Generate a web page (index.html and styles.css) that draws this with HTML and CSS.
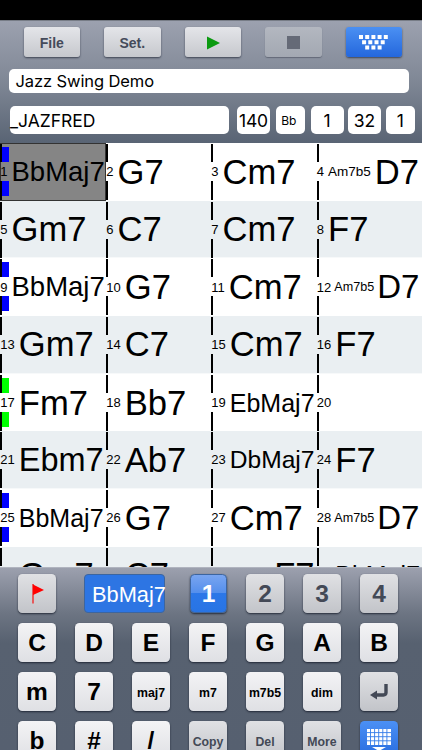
FILE: index.html
```html
<!DOCTYPE html>
<html lang="en">
<head>
<meta charset="utf-8">
<title>Jazz Swing Demo</title>
<link rel="stylesheet" href="styles.css">
</head>
<body>
<div class="app">
  <div class="status"></div>
  <header class="header">
    <div class="toolbar">
      <button class="tool">File</button>
      <button class="tool">Set.</button>
      <button class="tool"><svg width="14" height="14" viewBox="0 0 14 14"><path d="M1 .5 14 7 1 13.5z" fill="#0b9a10"/></svg></button>
      <button class="tool tool-off"><svg width="13" height="13"><rect width="13" height="13" fill="#656a77"/></svg></button>
      <button class="tool tool-blue"><svg width="29" height="15" viewBox="0 0 29 15" fill="#fff"><path d="M0 0h4v4h-4zM6.2 0h4v4h-4zM12.4 0h4v4h-4zM18.6 0h4v4h-4zM24.8 0h4v4h-4zM3.1 5.2h4v4h-4zM9.3 5.2h4v4h-4zM15.5 5.2h4v4h-4zM21.7 5.2h4v4h-4zM6.2 10.4h4v4h-4zM12.4 10.4h4v4h-4zM18.6 10.4h4v4h-4z"/></svg></button>
    </div>
    <div class="field title"><span>Jazz Swing Demo</span></div>
    <div class="fields">
      <div class="field style"><span>_JAZFRED</span></div>
      <div class="field tempo"><span>140</span></div>
      <div class="field key">Bb</div>
      <div class="field start">1</div>
      <div class="field end">32</div>
      <div class="field repeat">1</div>
    </div>
  </header>
  <main class="chart">
    <div class="cell selected mark-a"><i>1</i><b class="s27">BbMaj7</b></div>
    <div class="cell"><i>2</i><b>G7</b></div>
    <div class="cell"><i>3</i><b>Cm7</b></div>
    <div class="cell"><i>4</i><b class="mini">Am7b5</b><b>D7</b></div>

    <div class="cell alt"><i>5</i><b>Gm7</b></div>
    <div class="cell alt"><i>6</i><b>C7</b></div>
    <div class="cell alt"><i>7</i><b>Cm7</b></div>
    <div class="cell alt"><i>8</i><b>F7</b></div>

    <div class="cell mark-a"><i>9</i><b class="s27">BbMaj7</b></div>
    <div class="cell"><i>10</i><b>G7</b></div>
    <div class="cell"><i>11</i><b>Cm7</b></div>
    <div class="cell"><i>12</i><b class="mini narrow">Am7b5</b><b class="s33">D7</b></div>

    <div class="cell alt"><i>13</i><b>Gm7</b></div>
    <div class="cell alt"><i>14</i><b>C7</b></div>
    <div class="cell alt"><i>15</i><b>Cm7</b></div>
    <div class="cell alt"><i>16</i><b>F7</b></div>

    <div class="cell mark-b"><i>17</i><b>Fm7</b></div>
    <div class="cell"><i>18</i><b>Bb7</b></div>
    <div class="cell"><i>19</i><b class="s25">EbMaj7</b></div>
    <div class="cell"><i>20</i></div>

    <div class="cell alt"><i>21</i><b class="s32">Ebm7</b></div>
    <div class="cell alt"><i>22</i><b>Ab7</b></div>
    <div class="cell alt"><i>23</i><b class="s24">DbMaj7</b></div>
    <div class="cell alt"><i>24</i><b>F7</b></div>

    <div class="cell mark-a"><i>25</i><b class="s25">BbMaj7</b></div>
    <div class="cell"><i>26</i><b>G7</b></div>
    <div class="cell"><i>27</i><b>Cm7</b></div>
    <div class="cell"><i>28</i><b class="mini narrow">Am7b5</b><b class="s33">D7</b></div>

    <div class="cell alt"><i>29</i><b>Gm7</b></div>
    <div class="cell alt"><i>30</i><b>C7</b></div>
    <div class="cell alt"><i>31</i><b class="mini">Cm7</b><b class="last">F7</b></div>
    <div class="cell alt"><i>32</i><b class="s25">BbMaj7</b></div>
  </main>
  <section class="keyboard">
    <button class="keycap grey"><svg width="13" height="22" viewBox="0 0 13 22"><path d="M2 1v19.5" stroke="#e33" stroke-width="1.5"/><path d="M2 1.500 13 7 2 12z" fill="#f00"/></svg></button>
    <div class="display">BbMaj7</div>
    <button class="keycap active">1</button>
    <button class="keycap grey">2</button>
    <button class="keycap grey">3</button>
    <button class="keycap grey">4</button>

    <button class="keycap">C</button>
    <button class="keycap">D</button>
    <button class="keycap">E</button>
    <button class="keycap">F</button>
    <button class="keycap">G</button>
    <button class="keycap">A</button>
    <button class="keycap">B</button>

    <button class="keycap">m</button>
    <button class="keycap">7</button>
    <button class="keycap small">maj7</button>
    <button class="keycap small">m7</button>
    <button class="keycap small">m7b5</button>
    <button class="keycap small">dim</button>
    <button class="keycap grey"><svg width="18" height="16" viewBox="0 0 18 16"><path d="M16 0v8.500q0 2.500-2.500 2.500H5" fill="none" stroke="#434956" stroke-width="3.4"/><path d="M0 11 7 6.500v9z" fill="#434956"/></svg></button>

    <button class="keycap">b</button>
    <button class="keycap">#</button>
    <button class="keycap">/</button>
    <button class="keycap grey small">Copy</button>
    <button class="keycap grey small">Del</button>
    <button class="keycap grey small">More</button>
    <button class="keycap blue"><svg width="24" height="22" viewBox="0 0 24 22" fill="#fff"><path d="M0 0h24v16H0z"/><path d="M3.500 0v16M7.600 0v16M11.700 0v16M15.800 0v16M19.900 0v16M0 3.600h24M0 7.700h24M0 11.800h24" stroke="#327be9" stroke-width=".9"/><path d="M5 18h14l-7 4z"/></svg></button>
  </section>
</div>
</body>
</html>
```

FILE: styles.css
```css
* { box-sizing: border-box; }
body { margin: 0; background: #000; font-family: "Liberation Sans", Arial, sans-serif; }
button { border: 0; padding: 0; font-family: inherit; }
.app { width: 422px; height: 750px; overflow: hidden; display: flex; flex-direction: column; }
.status { height: 20px; background: #000; flex: none; }

.header {
  height: 123px; flex: none; padding-top: 6px;
  background: linear-gradient(#9ca1af, #7f8795 50%, #596474);
  border-top: 1px solid #777c86;
}
.toolbar { display: flex; gap: 24px; padding-left: 23.5px; height: 42px; }
.tool {
  width: 56.5px; height: 29.5px; border-radius: 3px; flex: none;
  display: flex; align-items: center; justify-content: center;
  background: linear-gradient(#e4e5e9, #c6c8cd);
  box-shadow: 0 1px 2px rgba(30, 35, 50, .7);
  font-size: 14px; font-weight: bold; color: #454b5a; padding-top: 2px;
}
.tool-off { background: linear-gradient(#b3b7c0, #a3a8b2); box-shadow: 0 1px 1px rgba(60, 65, 80, .5); }
.tool-blue { background: linear-gradient(#4b90f3, #2467dc); }

.field {
  background: #fff; border-radius: 5px; color: #000; flex: none;
  display: flex; align-items: center; justify-content: center; white-space: nowrap;
  font-family: Inter, sans-serif; font-size: 17.5px;
}
.title { margin-left: 8.5px; width: 400.5px; height: 24px; justify-content: flex-start; padding-left: 7px; font-size: 16.5px; letter-spacing: -.1px; }
.fields { display: flex; margin-top: 13px; padding-left: 10px; height: 28px; }
.style { width: 218.5px; justify-content: flex-start; }
.tempo { width: 33px; margin-left: 8.5px; letter-spacing: -.2px; }
.key { width: 28.5px; margin-left: 6px; font-size: 12px; padding-right: 3px; }
.start { width: 33px; margin-left: 6px; }
.end { width: 33px; margin-left: 4.5px; }
.repeat { width: 28.5px; margin-left: 5px; }

.chart {
  height: 423.5px; flex: none; overflow: hidden; background: #fff;
  display: grid; grid-template-columns: 106px 105px 105.5px 105.5px; grid-auto-rows: 57.7px;
}
.cell {
  position: relative; display: flex; align-items: center; gap: 4px; padding: 0 0 0 .3px;
  white-space: nowrap; color: #000;
}
.cell::before {
  content: ""; position: absolute; left: 0; top: 1px; width: 2px; height: 56px;
  background: linear-gradient(#000 18px, transparent 18px 37px, #000 37px);
}
.cell:nth-child(4n)::before { left: .5px; }
.cell i { font-style: normal; font-size: 13px; position: relative; z-index: 1; }
.cell b { font-weight: normal; font-size: 34.6px; line-height: 40px; }
.cell .s33 { font-size: 33px; }
.cell .s32 { font-size: 32.5px; }
.cell .s27 { font-size: 27.5px; }
.cell .s25 { font-size: 25px; }
.cell .s24 { font-size: 24.6px; }
.cell .mini { font-size: 13.5px; }
.cell .mini + b { margin-left: 0; }
.cell .mini.narrow { font-size: 12.6px; margin-left: -1px; }
.cell .mini.narrow + b { margin-left: -1px; }
.cell .last { margin-left: auto !important; margin-right: 2px; }
.alt { background: #eaeff2; border-bottom: 1px solid #f7f9fa; }
.selected { background: #858585; box-shadow: inset 0 0 0 1px #333; }
.mark-a::after, .mark-b::after {
  content: ""; position: absolute; left: 2px; top: 4px; width: 6.5px; height: 49px;
  background: linear-gradient(#0000fe 15px, transparent 15px 34px, #0000fe 34px);
}
.mark-b::after { background: linear-gradient(#0f0 15px, transparent 15px 34px, #0f0 34px); }

.keyboard {
  height: 183.5px; flex: none; overflow: hidden; padding: 6px 0 0 18px;
  border-top: 1px solid #b0b4bf;
  background: linear-gradient(#9ca0ae, #6d7583 45px, #576170 75px, #566070);
  display: grid; grid-template-columns: repeat(7, 38px); grid-auto-rows: 39px; gap: 10px 19px;
}
.keycap {
  border-radius: 4.5px; display: flex; align-items: center; justify-content: center;
  background: linear-gradient(#f3f3f5, #dfe0e4);
  box-shadow: 0 1px 2px rgba(15, 20, 35, .75);
  color: #000; font-size: 24.5px; font-weight: bold; padding-top: 2px;
}
.grey { background: linear-gradient(#e0e1e4, #c2c4c9); color: #434956; }
.small { font-size: 12.3px; padding-top: 3px; }
.active {
  color: #fff; border: 1px solid #3c659f; width: 37px; margin-left: 1px;
  background: linear-gradient(#79a5f0, #538eec 50%, #2c77e8 50%, #2874e4);
}
.blue { background: linear-gradient(#4b90f5, #2569dd); padding: 0; }
.display {
  grid-column: 2 / 4; margin: 0 5px 0 9px; border-radius: 4px; background: #2d75e3; border: 1px solid #3c659f;
  color: #fff; font-size: 21.8px; line-height: 39px; padding-left: 7px; white-space: nowrap;
}
```
